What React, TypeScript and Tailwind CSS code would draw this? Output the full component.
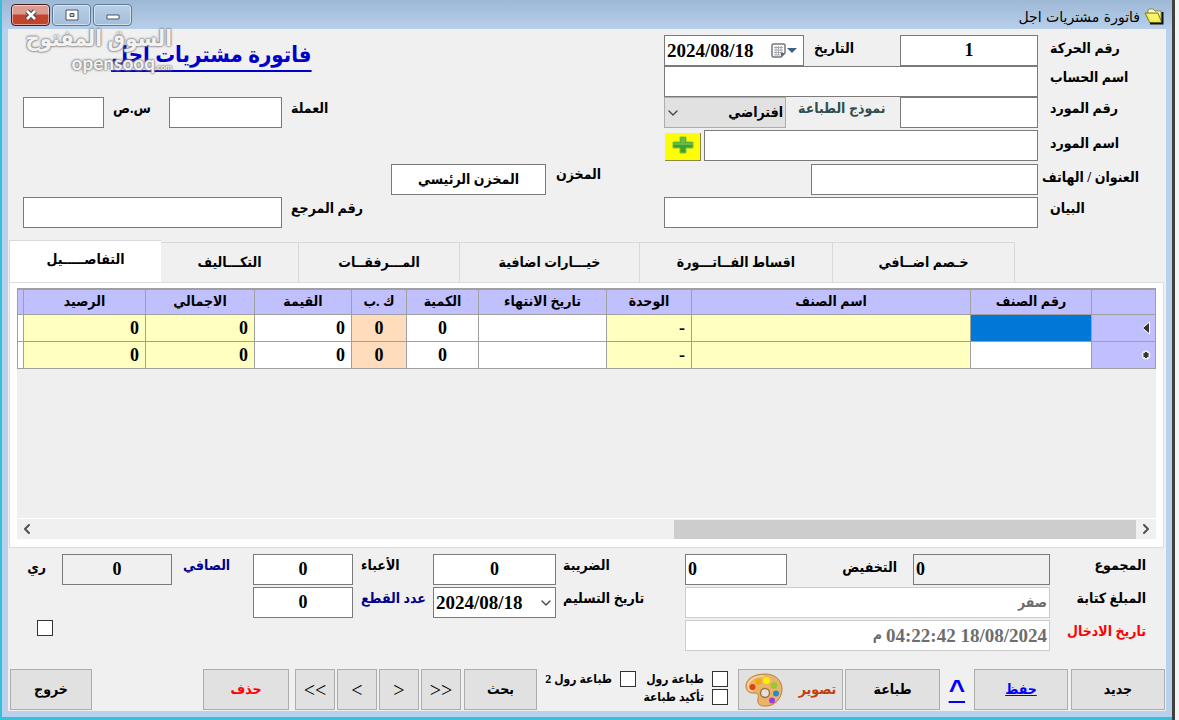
import type { InputHTMLAttributes, ReactNode } from 'react';
import { ChevronDown, ChevronLeft, ChevronRight } from 'lucide-react';
import clsx from 'clsx';

const TABS = [
  { title: 'التفاصـــــيل', width: 'w-[152px]' },
  { title: 'التكـــاليف', width: 'w-[138px]' },
  { title: 'المـــرفقــات', width: 'w-[161px]' },
  { title: 'خيـــارات اضافية', width: 'w-[180px]' },
  { title: 'اقساط الفــاتـــورة', width: 'w-[193px]' },
  { title: 'خـصم اضــافي', width: 'w-[182px]' },
];

const COLUMNS = [
  { title: 'رقم الصنف', width: 'w-[121px]', cell: 'bg-white' },
  { title: 'اسم الصنف', width: '', cell: 'bg-[#ffffc0]' },
  { title: 'الوحدة', width: 'w-[85px]', cell: 'bg-[#ffffc0] text-right', value: '-' },
  { title: 'تاريخ الانتهاء', width: 'w-[128px]', cell: 'bg-white' },
  { title: 'الكمية', width: 'w-[72px]', cell: 'bg-white text-center', value: '0' },
  { title: 'ك .ب', width: 'w-[55px]', cell: 'bg-[#ffdcbc] text-center', value: '0' },
  { title: 'القيمة', width: 'w-[97px]', cell: 'bg-white text-right', value: '0' },
  { title: 'الاجمالي', width: 'w-[109px]', cell: 'bg-[#ffffc0] text-right', value: '0' },
  { title: 'الرصيد', width: 'w-[122px]', cell: 'bg-[#ffffc0] text-right', value: '0' },
  { title: '', width: 'w-[6px]', cell: 'bg-white' },
];

function Label({
  htmlFor,
  className,
  children,
}: {
  htmlFor: string;
  className?: string;
  children: ReactNode;
}) {
  return (
    <label htmlFor={htmlFor} className={clsx('shrink-0 whitespace-nowrap', className)}>
      {children}
    </label>
  );
}

function Field({ className, ...props }: InputHTMLAttributes<HTMLInputElement>) {
  return (
    <input
      type="text"
      className={clsx('h-[31px] min-w-0 border px-[2px] outline-none', className)}
      {...props}
    />
  );
}

function Check({ id, label }: { id: string; label?: string }) {
  return (
    <input
      id={id}
      type="checkbox"
      aria-label={label}
      className="size-4 shrink-0 appearance-none border border-[#333] bg-white checked:bg-[#0078d7]"
    />
  );
}

function PushButton({ className, children }: { className?: string; children: ReactNode }) {
  return (
    <button
      type="button"
      className={clsx(
        'flex h-[41px] shrink-0 items-center justify-center border border-[#adadad] bg-[#e1e1e1]',
        className
      )}
    >
      {children}
    </button>
  );
}

function FolderIcon() {
  return (
    <svg width="20" height="17" viewBox="0 0 20 17" aria-hidden="true">
      <path d="M4 5V2l1-1h4l2 2h6v11" fill="#ffffb0" stroke="#8a8a50" />
      <path d="M1 5h13l4 10H6z" fill="#f1ee3c" stroke="#77752a" />
      <path d="M18.5 4v11.5H6" fill="none" stroke="#111" strokeWidth="2" />
      <path d="M4 7h9M5 9h9M6 11h9" stroke="#fff9a0" />
    </svg>
  );
}

function CalendarIcon() {
  return (
    <svg width="15" height="15" viewBox="0 0 15 15" aria-hidden="true">
      <path d="M2 1h11l1 1v8l-4 4H2l-1-1V2z" fill="#fff" stroke="#777" strokeWidth="1.5" />
      <path d="M3 4.5h9M3 7h9M3 9.5h9M3 12h6M5 3v9M7.5 3v9M10 3v9" stroke="#a5a9b0" />
      <path d="M14 10l-4 4v-4z" fill="#666" />
    </svg>
  );
}

function PlusIcon() {
  return (
    <svg width="22" height="18" viewBox="0 0 22 18" aria-hidden="true">
      <path d="M8 1h6v5h7v6h-7v5H8v-5H1V6h7z" fill="#3fa02c" stroke="#7fc63d" />
      <path d="M9 2h4v5h7v2H2V7h7z" fill="#68bb48" />
    </svg>
  );
}

function PaletteIcon() {
  return (
    <svg width="38" height="34" viewBox="0 0 38 34" aria-hidden="true">
      <path
        d="M20 1C9 1 1 6 1 13c0 6 4 7 8 7 4 0 5 2 4 6-1 5 2 7 6 7 11 1 18-8 18-17C37 7 30 1 20 1z"
        fill="#e9b368"
        stroke="#b9803c"
      />
      <path d="M19 3C10 3 3 7 3 13c0 4 2 5 5 5" fill="none" stroke="#f8d79c" strokeWidth="1.5" />
      <circle cx="20" cy="20" r="4.5" fill="#e1e1e1" stroke="#a87536" strokeWidth="1.5" />
      <circle cx="7.5" cy="14" r="3" fill="#e0401c" />
      <circle cx="13.5" cy="8.5" r="3" fill="#f5a800" />
      <circle cx="21.5" cy="7.5" r="3.5" fill="#fff000" />
      <circle cx="29" cy="12.5" r="3.2" fill="#94cc28" />
      <circle cx="31" cy="20.5" r="3" fill="#1c8fd0" />
      <circle cx="27" cy="27.5" r="3" fill="#a03be0" />
    </svg>
  );
}

function TitleBar() {
  const control =
    'flex h-[22px] w-[39px] items-center justify-center rounded-sm border shadow-[inset_0_0_0_1px_#ffffff80]';
  return (
    <header className="flex h-[29px] shrink-0 items-center bg-linear-to-b from-[#9db8d5] to-[#b7cfea] pr-2 pl-[9px]">
      <h1 className="flex flex-1 items-center gap-1 pt-1 font-['DejaVu_Sans'] text-[14px] font-normal">
        <FolderIcon />
        فاتورة مشتريات اجل
      </h1>
      <div dir="ltr" className="flex gap-[2px]">
        <button
          type="button"
          aria-label="إغلاق"
          className={clsx(
            control,
            'border-[#4b1a1d] bg-linear-to-b from-[#dd9a8e] from-45% to-[#c0452c] to-50%'
          )}
        >
          <svg width="14" height="12" viewBox="0 0 14 12">
            <path d="M3 2l8 8M11 2l-8 8" stroke="#4d4654" strokeWidth="5" />
            <path d="M3 2l8 8M11 2l-8 8" stroke="#fff" strokeWidth="2.6" />
          </svg>
        </button>
        <button
          type="button"
          aria-label="تكبير"
          className={clsx(control, 'border-[#5f7996] bg-linear-to-b from-[#b9cfe6] to-[#a3bedb]')}
        >
          <svg width="14" height="12" viewBox="0 0 14 12">
            <path d="M1 1h12v10H1zM5 4.5h4v3H5z" fill="#fff" fillRule="evenodd" stroke="#4c5566" />
          </svg>
        </button>
        <button
          type="button"
          aria-label="تصغير"
          className={clsx(control, 'border-[#5f7996] bg-linear-to-b from-[#b9cfe6] to-[#a3bedb]')}
        >
          <svg width="14" height="12" viewBox="0 0 14 12">
            <path d="M1 6h12v4H1z" fill="#fff" stroke="#4c5566" />
          </svg>
        </button>
      </div>
    </header>
  );
}

function InvoiceHeader() {
  const box = 'border-[#7a7a7a] bg-white';
  return (
    <div className="flex pt-[6px]">
      <div className="flex min-w-0 flex-1 flex-col">
        <div className="flex">
          <Label htmlFor="move" className="w-[128px] pt-[2px] pl-3 text-left">
            رقم الحركة
          </Label>
          <Field id="move" defaultValue="1" className={clsx(box, 'flex-1 text-center text-[18px]')} />
          <Label htmlFor="date" className="w-[96px] pt-[2px] pl-[10px] text-left">
            التاريخ
          </Label>
          <div dir="ltr" className={clsx(box, 'flex h-[31px] w-[140px] items-center border')}>
            <input
              id="date"
              defaultValue="2024/08/18"
              className="w-[106px] pl-[2px] text-[19px] outline-none"
            />
            <button type="button" aria-label="اختيار التاريخ" className="flex items-center gap-px">
              <CalendarIcon />
              <svg width="10" height="6" viewBox="0 0 10 6">
                <path d="M0 0h10L5 5z" fill="#3f6186" />
              </svg>
            </button>
          </div>
        </div>
        <div className="flex">
          <Label htmlFor="account" className="w-[128px] pl-3 text-left">
            اسم الحساب
          </Label>
          <Field id="account" className={clsx(box, 'flex-1')} />
        </div>
        <div className="flex">
          <Label htmlFor="supplier-no" className="w-[128px] pl-3 text-left">
            رقم المورد
          </Label>
          <Field id="supplier-no" className={clsx(box, 'flex-1')} />
          <Label htmlFor="template" className="w-[114px] pl-3 text-left text-[#2f4f4f]">
            نموذج الطباعة
          </Label>
          <div className="relative w-[122px]">
            <select
              id="template"
              className="h-[31px] w-full appearance-none border border-[#adadad] bg-[#e1e1e1] pr-[2px] pl-6 outline-none"
            >
              <option>افتراضي</option>
            </select>
            <ChevronDown
              size={16}
              strokeWidth={2}
              className="pointer-events-none absolute top-2 left-px text-[#444]"
            />
          </div>
        </div>
        <div className="mt-[2px] flex">
          <Label htmlFor="supplier" className="w-[128px] pt-[2px] pl-3 text-left">
            اسم المورد
          </Label>
          <Field id="supplier" className={clsx(box, 'flex-1')} />
          <button
            type="button"
            aria-label="اضافة مورد"
            className="mt-[3px] mr-[3px] ml-px flex h-7 w-9 shrink-0 justify-center border-r border-b border-[#8a8a40] bg-[#fdfd08] pt-[3px]"
          >
            <PlusIcon />
          </button>
        </div>
        <div className="mt-[3px] flex">
          <Label htmlFor="address" className="w-[128px] pt-[2px] pl-1 text-left">
            العنوان / الهاتف
          </Label>
          <Field id="address" className={clsx(box, 'flex-1')} />
          <div className="w-[147px]" />
        </div>
        <div className="mt-[2px] flex">
          <Label htmlFor="note" className="w-[128px] pl-3 text-left">
            البيان
          </Label>
          <Field id="note" className={clsx(box, 'flex-1')} />
        </div>
      </div>

      <div className="flex w-[273px] items-end pb-[33px]">
        <Label htmlFor="store" className="mb-2 w-[118px] pl-[10px] text-left">
          المخزن
        </Label>
        <Field
          id="store"
          defaultValue="المخزن الرئيسي"
          className={clsx(box, 'w-[155px] text-center')}
        />
      </div>

      <div className="flex w-[383px] flex-col pl-[15px]">
        <h2 className="pt-1 pl-[88px] text-left text-[22px] leading-8 text-[#0000c8] underline decoration-2 underline-offset-8">
          فاتورة مشتريات اجل
        </h2>
        <div className="mt-[26px] flex">
          <Label htmlFor="currency" className="w-[109px] pl-[9px] text-left">
            العملة
          </Label>
          <Field id="currency" className={clsx(box, 'w-[113px]')} />
          <Label htmlFor="rate" className="w-[65px] pl-[9px] text-left">
            س.ص
          </Label>
          <Field id="rate" className={clsx(box, 'w-[81px]')} />
        </div>
        <div className="mt-[69px] flex">
          <Label htmlFor="reference" className="w-[109px] pl-[9px] text-left">
            رقم المرجع
          </Label>
          <Field id="reference" className={clsx(box, 'w-[259px]')} />
        </div>
      </div>
    </div>
  );
}

function ItemsTable() {
  return (
    <table className="w-full table-fixed border-collapse border-t-2 border-[#a0a0a0]">
      <thead>
        <tr className="h-[25px] bg-[#c0c0ff]">
          <th className="w-[64px] border border-[#a0a0a0]" />
          {COLUMNS.map((col) => (
            <th key={col.title} className={clsx('border border-[#a0a0a0] p-0 leading-5', col.width)}>
              {col.title}
            </th>
          ))}
        </tr>
      </thead>
      <tbody>
        {[0, 1].map((row) => (
          <tr key={row} className="h-[27px]">
            <th className="border border-[#a0a0a0] bg-[#c0c0ff] pr-1">
              <svg width="10" height="14" viewBox="0 0 10 14" aria-hidden="true">
                {row === 0 ? (
                  <path d="M8.5 1v12L1.5 7z" fill="#333" stroke="#fff" />
                ) : (
                  <>
                    <circle cx="5" cy="7" r="4.5" fill="#eee" />
                    <path d="M5 4v6M2.5 5.5l5 3M7.5 5.5l-5 3" stroke="#333" strokeWidth="2" />
                  </>
                )}
              </svg>
            </th>
            {COLUMNS.map((col, i) => (
              <td
                key={col.title}
                className={clsx(
                  'border border-[#a0a0a0] p-0 text-[18px] leading-6',
                  row === 0 && i === 0 ? 'bg-[#0078d7]' : col.cell,
                  col.title && 'px-[6px]'
                )}
              >
                {col.value}
              </td>
            ))}
          </tr>
        ))}
      </tbody>
    </table>
  );
}

function Details() {
  return (
    <section className="flex flex-1 flex-col pt-3 pr-[2px] pl-px">
      <div dir="ltr" role="tablist" className="flex items-end">
        {TABS.map((tab, i) => (
          <button
            key={tab.title}
            type="button"
            role="tab"
            aria-selected={i === 0}
            className={clsx(
              'shrink-0 border-[#d9d9d9]',
              tab.width,
              i === 0 ? 'h-[42px] border-t border-l bg-white pb-1' : 'h-10 border-t border-r'
            )}
          >
            {tab.title}
          </button>
        ))}
      </div>
      <div className="flex flex-1 flex-col border border-[#dcdcdc] bg-white px-[7px] pt-[5px] pb-[8px]">
        <ItemsTable />
        <div className="min-h-[100px] flex-1 bg-[#efefef]" />
        <div dir="ltr" className="mt-px flex h-5 items-center bg-[#f0f0f0]">
          <button type="button" aria-label="يسار" className="flex w-5 justify-center">
            <ChevronLeft size={16} strokeWidth={3} className="text-[#505050]" />
          </button>
          <div className="flex h-[19px] flex-1 justify-end">
            <div className="w-[42%] bg-[#cdcdcd]" />
          </div>
          <button type="button" aria-label="يمين" className="flex w-5 justify-center">
            <ChevronRight size={16} strokeWidth={3} className="text-[#505050]" />
          </button>
        </div>
      </div>
    </section>
  );
}

function Totals() {
  const box = 'border-[#7a7a7a] bg-white';
  const locked = 'border-[#7a7a7a] bg-[#f0f0f0]';
  return (
    <div className="flex pt-[6px]">
      <div className="flex min-w-0 flex-1 flex-col gap-[2px]">
        <div className="flex">
          <Label htmlFor="total" className="w-[116px] pr-5">
            المجموع
          </Label>
          <Field
            id="total"
            readOnly
            defaultValue="0"
            className={clsx(locked, 'flex-1 text-left text-[18px]')}
          />
          <Label htmlFor="discount" className="w-[126px] pt-[2px] pr-4">
            التخفيض
          </Label>
          <Field
            id="discount"
            defaultValue="0"
            className={clsx(box, 'w-[102px] text-left text-[18px]')}
          />
        </div>
        <div className="flex">
          <Label htmlFor="in-words" className="w-[116px] pr-5">
            المبلغ كتابة
          </Label>
          <Field
            id="in-words"
            readOnly
            defaultValue="صفر"
            className="flex-1 border-[#cccccc] bg-white text-[#6d6d6d]"
          />
        </div>
        <div className="flex">
          <span className="w-[116px] shrink-0 pr-5 text-[#ff0000]">تاريخ الادخال</span>
          <div className="flex h-[31px] flex-1 items-center gap-1 border border-[#cccccc] bg-white px-[2px] text-[#6d6d6d]">
            <span dir="ltr" className="text-[19px]">
              04:22:42 18/08/2024
            </span>
            <span>م</span>
          </div>
        </div>
      </div>

      <div className="flex flex-col gap-[2px]">
        <div className="flex">
          <Label htmlFor="tax" className="w-[129px] pl-[7px] text-left">
            الضريبة
          </Label>
          <Field
            id="tax"
            defaultValue="0"
            className={clsx(box, 'w-[123px] text-center text-[18px]')}
          />
        </div>
        <div className="flex">
          <Label htmlFor="delivery" className="w-[129px] pl-[7px] text-left">
            تاريخ التسليم
          </Label>
          <div dir="ltr" className="relative w-[123px]">
            <select
              id="delivery"
              className="h-[31px] w-full appearance-none border border-[#7a7a7a] bg-white pl-[2px] text-[19px] outline-none"
            >
              <option>2024/08/18</option>
            </select>
            <ChevronDown
              size={16}
              strokeWidth={2}
              className="pointer-events-none absolute top-2 right-[2px] text-[#444]"
            />
          </div>
        </div>
      </div>

      <div className="flex flex-col gap-[2px]">
        <div className="flex">
          <Label htmlFor="charges" className="w-[80px] pl-2 text-left">
            الأعباء
          </Label>
          <Field
            id="charges"
            defaultValue="0"
            className={clsx(box, 'w-[100px] text-center text-[18px]')}
          />
        </div>
        <div className="flex">
          <Label htmlFor="pieces" className="w-[80px] pl-2 text-left text-[#00008b]">
            عدد القطع
          </Label>
          <Field
            id="pieces"
            defaultValue="0"
            className={clsx(box, 'w-[100px] text-center text-[18px]')}
          />
        </div>
      </div>

      <div className="flex w-[245px] flex-col justify-between">
        <div className="flex">
          <Label htmlFor="net" className="w-[81px] pl-[11px] text-left text-[#00008b]">
            الصافي
          </Label>
          <Field
            id="net"
            readOnly
            defaultValue="0"
            className={clsx(locked, 'w-[110px] text-center text-[18px]')}
          />
          <span className="pt-[2px] pr-4">ري</span>
        </div>
        <div className="flex justify-end pb-[15px] pl-[29px]">
          <Check id="posted" label="مرحل" />
        </div>
      </div>
    </div>
  );
}

function Toolbar() {
  return (
    <footer className="flex items-center pt-[18px] pr-px pb-px pl-[2px]">
      <PushButton className="w-[94px]">جديد</PushButton>
      <PushButton className="mr-[3px] w-[94px] text-[#0000ff] underline">حفظ</PushButton>
      <a
        href="#top"
        className="mx-[9px] w-4 text-center font-['Liberation_Sans'] text-[28px] leading-8 text-[#0000ff] underline"
      >
        ^
      </a>
      <PushButton className="w-[95px]">طباعة</PushButton>
      <PushButton className="mr-[2px] w-[105px] gap-4 text-[#c0400c]">
        تصوير
        <PaletteIcon />
      </PushButton>
      <div className="mr-[10px] mb-[3px] flex flex-col gap-[2px] text-[12px]">
        <div className="flex items-center">
          <Check id="roll" />
          <Label htmlFor="roll" className="w-[76px] pr-2 leading-4">
            طباعة رول
          </Label>
          <Check id="roll2" />
          <Label htmlFor="roll2" className="w-[83px] pr-2 leading-4">
            طباعة رول 2
          </Label>
        </div>
        <div className="flex items-center">
          <Check id="confirm" />
          <Label htmlFor="confirm" className="pr-2 leading-4">
            تأكيد طباعة
          </Label>
        </div>
      </div>
      <PushButton className="w-[73px]">بحث</PushButton>
      <div dir="ltr" className="mr-[3px] ml-[6px] flex gap-[2px] text-[20px] font-normal">
        {['<<', '<', '>', '>>'].map((sign) => (
          <PushButton key={sign} className="w-[40px]">
            {sign}
          </PushButton>
        ))}
      </div>
      <PushButton className="w-[86px] text-[#ff0000]">حذف</PushButton>
      <div className="flex-1" />
      <PushButton className="w-[82px]">خروج</PushButton>
    </footer>
  );
}

function Watermark() {
  return (
    <div
      dir="ltr"
      className="pointer-events-none absolute top-[21px] left-[12px] w-[160px] text-right whitespace-nowrap text-white/90 [text-shadow:0_0_2px_#777,0_0_2px_#888,0_0_3px_#999]"
    >
      <div className="flex justify-end text-[22px] leading-9">السوق المفتوح</div>
      <div className="font-['Lato'] text-[19px] leading-3">
        opensooq<span className="text-[8px]">.com</span>
      </div>
    </div>
  );
}

export default function App() {
  return (
    <div
      id="top"
      dir="rtl"
      className="relative flex min-h-screen bg-[#f4f4f4] font-['Liberation_Serif','DejaVu_Sans_Condensed','DejaVu_Sans',serif] text-[14px] leading-6 font-bold text-black"
    >
      <div className="w-1 shrink-0" />
      <div className="w-[3px] shrink-0 bg-[#404040]" />
      <div className="flex min-w-0 flex-1 flex-col border-b-[3px] border-l-2 border-[#35c0dc] bg-[#b9d1ea]">
        <TitleBar />
        <main className="mr-[6px] mb-[6px] ml-[6px] flex flex-1 flex-col bg-[#f0f0f0]">
          <InvoiceHeader />
          <Details />
          <Totals />
          <Toolbar />
        </main>
      </div>
      <Watermark />
    </div>
  );
}
